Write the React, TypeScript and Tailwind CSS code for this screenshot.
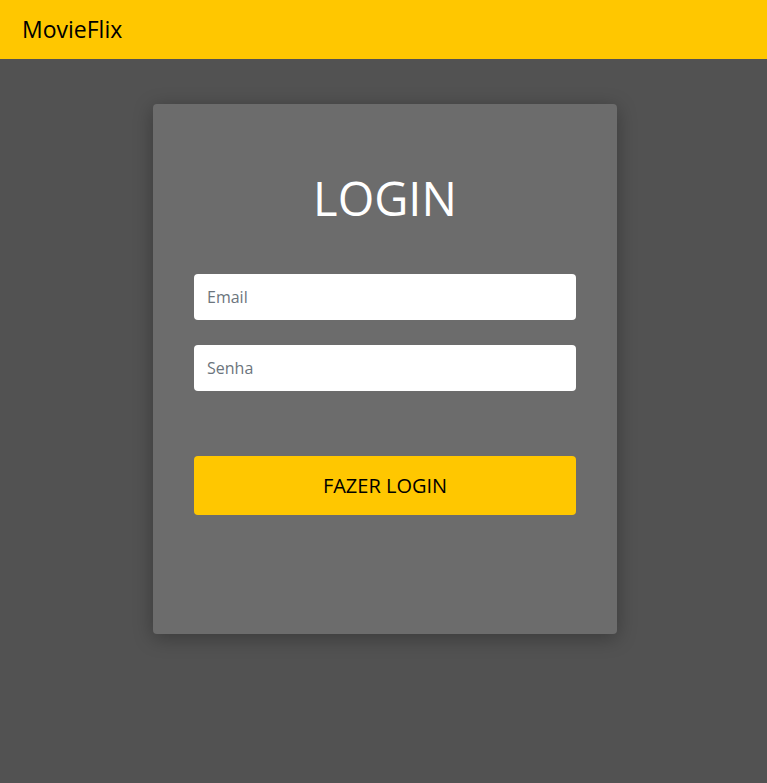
export default function App() {
  return (
    <div className="min-h-screen bg-[#525252] font-['Open_Sans',sans-serif]">
      {/* Navbar */}
      <nav className="h-[59px] bg-[#FFC700] flex items-center px-[22px]">
        <span className="text-[23px] text-black leading-none">MovieFlix</span>
      </nav>

      {/* Login card */}
      <main className="flex justify-center pt-[45px] pl-[3px]">
        <div className="w-[464px] h-[530px] bg-[#6C6C6C] rounded-[4px] shadow-[0_4px_20px_rgba(0,0,0,0.3)] px-[41px] pt-[65px]">
          <h1 className="text-center text-white text-[47px] leading-[58px] mb-[47px]">
            LOGIN
          </h1>
          <form className="flex flex-col">
            <input
              type="email"
              placeholder="Email"
              className="h-[46px] rounded-[4px] bg-white px-[13px] text-[16px] text-gray-800 placeholder:text-[#6c757d] outline-none mb-[25px]"
            />
            <input
              type="password"
              placeholder="Senha"
              className="h-[46px] rounded-[4px] bg-white px-[13px] text-[16px] text-gray-800 placeholder:text-[#6c757d] outline-none mb-[65px]"
            />
            <button
              type="button"
              className="h-[59px] rounded-[4px] bg-[#FFC700] text-black text-[20px] uppercase"
            >
              Fazer login
            </button>
          </form>
        </div>
      </main>
    </div>
  );
}
